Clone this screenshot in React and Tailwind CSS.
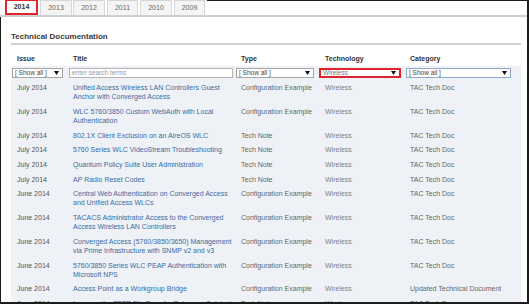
import React from 'react'

const tabs = [
  { year: '2014', cls: 'ml-[5px] w-[33px]' },
  { year: '2013', cls: 'ml-[2px] w-[32px]' },
  { year: '2012', cls: 'ml-[1px] w-[32px]' },
  { year: '2011', cls: 'ml-[2px] w-[31px]' },
  { year: '2010', cls: 'ml-[2px] w-[32px]' },
  { year: '2009', cls: 'ml-[2px] w-[31px]' },
]

const rows = [
  ['July 2014', 'Unified Access Wireless LAN Controllers Guest Anchor with Converged Access', 'Configuration Example', 'TAC Tech Doc'],
  ['July 2014', 'WLC 5760/3850 Custom WebAuth with Local Authentication', 'Configuration Example', 'TAC Tech Doc'],
  ['July 2014', '802.1X Client Exclusion on an AireOS WLC', 'Tech Note', 'TAC Tech Doc'],
  ['July 2014', '5760 Series WLC VideoStream Troubleshooting', 'Tech Note', 'TAC Tech Doc'],
  ['July 2014', 'Quantum Policy Suite User Administration', 'Tech Note', 'TAC Tech Doc'],
  ['July 2014', 'AP Radio Reset Codes', 'Tech Note', 'TAC Tech Doc'],
  ['June 2014', 'Central Web Authentication on Converged Access and Unified Access WLCs', 'Configuration Example', 'TAC Tech Doc'],
  ['June 2014', 'TACACS Administrator Access to the Converged Access Wireless LAN Controllers', 'Configuration Example', 'TAC Tech Doc'],
  ['June 2014', 'Converged Access (5760/3850/3650) Management via Prime Infrastructure with SNMP v2 and v3', 'Configuration Example', 'TAC Tech Doc'],
  ['June 2014', '5760/3850 Series WLC PEAP Authentication with Microsoft NPS', 'Configuration Example', 'TAC Tech Doc'],
  ['June 2014', 'Access Point as a Workgroup Bridge', 'Configuration Example', 'Updated Technical Document'],
  ['June 2014', 'Increase the TFTP File Transfer Rate on a Catalyst 3850 Series Switch', 'Tech Note', 'TAC Tech Doc'],
]

const cols = 'grid grid-cols-[56px_168px_84px_85px_117px]'

function Arrow() {
  return (
    <svg width="5" height="4" viewBox="0 0 5 4" className="shrink-0">
      <polygon points="0,0 5,0 2.5,4" fill="#111" />
    </svg>
  )
}

function Select({ label, cls, textCls = 'text-[#444]' }) {
  return (
    <div className={`flex h-[10px] items-center justify-between bg-white pl-[2px] pr-[3px] ${cls}`}>
      <span className={`text-[6.5px] leading-[8px] ${textCls}`}>{label}</span>
      <Arrow />
    </div>
  )
}

export default function App() {
  return (
    <div className="flex h-[304px] w-[529px] flex-col overflow-hidden border-r-2 border-b-2 border-[#1c1c1c] bg-white font-['Liberation_Sans',Arial,sans-serif]">
      <div className="flex h-[17px] shrink-0 items-end border-b-2 border-[#cfcfcf]">
        {tabs.map((t, i) => (
          <div
            key={t.year}
            className={
              i === 0
                ? `${t.cls} flex h-[16px] items-center justify-center border-2 border-[#e1242c] bg-white text-[7px] font-bold text-[#333]`
                : `${t.cls} flex h-[15px] items-center justify-center border border-b-0 border-[#d6d6d6] bg-[#f4f4f4] text-[7px] text-[#666]`
            }
          >
            {t.year}
          </div>
        ))}
        <div className="ml-[2px] h-full flex-1 border-t border-[#1c1c1c]" />
      </div>

      <div className="flex-1 border-l border-[#1c1c1c] pl-[10px] pr-[6px]">
        <div className="border-b-2 border-[#cfcfcf] pt-[15px] pb-[1px] text-[8px] font-bold leading-[10px] text-[#3a3a3a]">
          Technical Documentation
        </div>

        <div className={`${cols} pt-[9px] text-[7px] font-bold leading-[9px] text-[#333]`}>
          <div className="pl-[6px]">Issue</div>
          <div className="pl-[6px]">Title</div>
          <div className="pl-[6px]">Type</div>
          <div className="pl-[6px]">Technology</div>
          <div className="pl-[6px]">Category</div>
        </div>

        <div className="mt-[3px] bg-[#eef2f6] pt-[1.5px]">
          <div className={`${cols} items-center`}>
            <Select label="[ Show all ]" cls="ml-[1px] w-[51px] border border-[#a6a6a6]" />
            <div className="ml-[2px] flex h-[10px] w-[164px] items-center border border-[#b4b4b4] bg-white pl-[2px] text-[6.5px] leading-[8px] text-[#9a9a9a]">
              enter search terms
            </div>
            <Select label="[ Show all ]" cls="ml-[1px] w-[78px] border border-[#a6a6a6]" />
            <Select label="Wireless" cls="w-[82px] border-2 border-[#e1242c]" textCls="text-[#777]" />
            <Select label="[ Show all ]" cls="ml-[2px] w-[105px] border border-[#8fa8cc]" />
          </div>

          <div className="pt-[3px] text-[7px] leading-[9px]">
            {rows.map((r, i) => (
              <div key={i} className={`${cols} py-[2.85px]`}>
                <div className="pl-[6px] text-[#555]">{r[0]}</div>
                <div className="pl-[6px] pr-[2px] text-[#3b6aa3]">{r[1]}</div>
                <div className="pl-[6px] text-[#666]">{r[2]}</div>
                <div className="pl-[6px] text-[#808080]">Wireless</div>
                <div className="pl-[6px] text-[#666]">{r[3]}</div>
              </div>
            ))}
          </div>
        </div>
      </div>
    </div>
  )
}
